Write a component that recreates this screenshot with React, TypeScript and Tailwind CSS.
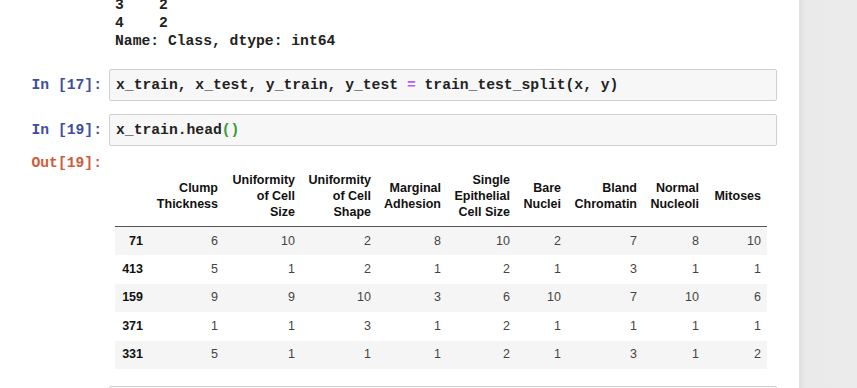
const cols = [
  { label: ['Clump', 'Thickness'], w: 'w-[75px]' },
  { label: ['Uniformity', 'of Cell', 'Size'], w: 'w-[77px]' },
  { label: ['Uniformity', 'of Cell', 'Shape'], w: 'w-[76px]' },
  { label: ['Marginal', 'Adhesion'], w: 'w-[70px]' },
  { label: ['Single', 'Epithelial', 'Cell Size'], w: 'w-[69px]' },
  { label: ['Bare', 'Nuclei'], w: 'w-[51px]' },
  { label: ['Bland', 'Chromatin'], w: 'w-[76px]' },
  { label: ['Normal', 'Nucleoli'], w: 'w-[62px]' },
  { label: ['Mitoses'], w: 'w-[62px]' },
]

const rows: [string, number[]][] = [
  ['71', [6, 10, 2, 8, 10, 2, 7, 8, 10]],
  ['413', [5, 1, 2, 1, 2, 1, 3, 1, 1]],
  ['159', [9, 9, 10, 3, 6, 10, 7, 10, 6]],
  ['371', [1, 1, 3, 1, 2, 1, 1, 1, 1]],
  ['331', [5, 1, 1, 1, 2, 1, 3, 1, 2]],
]

// jupyter-ish monospace, rendered a bit heavy like the screenshot
const mono = "font-['Liberation_Mono',monospace] font-bold text-[14.7px] leading-[18px]"

function InCell({ n, children }: { n: number; children: React.ReactNode }) {
  return (
    <div className="flex items-center">
      <div className={`w-[109px] shrink-0 pr-[7px] text-right text-[#3f4d9f] ${mono}`}>In [{n}]:</div>
      <div className={`flex h-[32px] w-[668px] items-center rounded-[2px] border border-[#cfcfcf] bg-[#f7f7f7] pl-[6px] text-[#222] ${mono}`}>
        {children}
      </div>
    </div>
  )
}

export default function App() {
  return (
    <div className="flex h-[388px] w-[857px] overflow-hidden bg-white">
      <div className="w-[799px] shrink-0 bg-white">
        <div className={`-mt-[4px] pl-[115px] whitespace-pre text-[#222] ${mono}`}>
          <div>3    2</div>
          <div>4    2</div>
          <div>Name: Class, dtype: int64</div>
        </div>

        <div className="mt-[19px] flex flex-col gap-[13px]">
          <InCell n={17}>
            <span className="whitespace-pre">
              x_train, x_test, y_train, y_test <span className="text-[#b75ee8]">=</span> train_test_split(x, y)
            </span>
          </InCell>
          <InCell n={19}>
            <span className="whitespace-pre">
              x_train.head<span className="text-[#3a9a3a]">()</span>
            </span>
          </InCell>
        </div>

        <div className="mt-[8px] flex">
          <div className={`w-[109px] shrink-0 pr-[7px] text-right text-[#d05a3a] ${mono}`}>Out[19]:</div>
          <table className="ml-[6px] mt-[12px] table-fixed border-collapse font-['Liberation_Sans',Arial,sans-serif] text-[12.5px]">
            <thead>
              <tr className="border-b border-[#555]">
                <th className="w-[34px]"></th>
                {cols.map((c) => (
                  <th
                    key={c.label.join(' ')}
                    className={`${c.w} whitespace-nowrap px-[6px] pb-[6px] pt-[6px] text-right align-middle font-bold leading-[16px] text-[#111]`}
                  >
                    {c.label.map((l) => (
                      <div key={l}>{l}</div>
                    ))}
                  </th>
                ))}
              </tr>
            </thead>
            <tbody>
              {rows.map(([idx, vals], i) => (
                <tr key={idx} className={`h-[28.5px] ${i % 2 === 0 ? 'bg-[#f5f5f5]' : 'bg-white'}`}>
                  <th className="pr-[6px] text-right font-bold text-[#111]">{idx}</th>
                  {vals.map((v, j) => (
                    <td key={j} className="pr-[6px] text-right text-[#444]">
                      {v}
                    </td>
                  ))}
                </tr>
              ))}
            </tbody>
          </table>
        </div>

        <div className="ml-[109px] mt-[17px] h-[20px] w-[668px] rounded-t-[2px] border border-[#cfcfcf] bg-[#f7f7f7]"></div>
      </div>
      <div className="flex-1 bg-gradient-to-r from-[#dedede] via-[#eaeaea] via-[12%] to-[#ebebeb]"></div>
    </div>
  )
}
